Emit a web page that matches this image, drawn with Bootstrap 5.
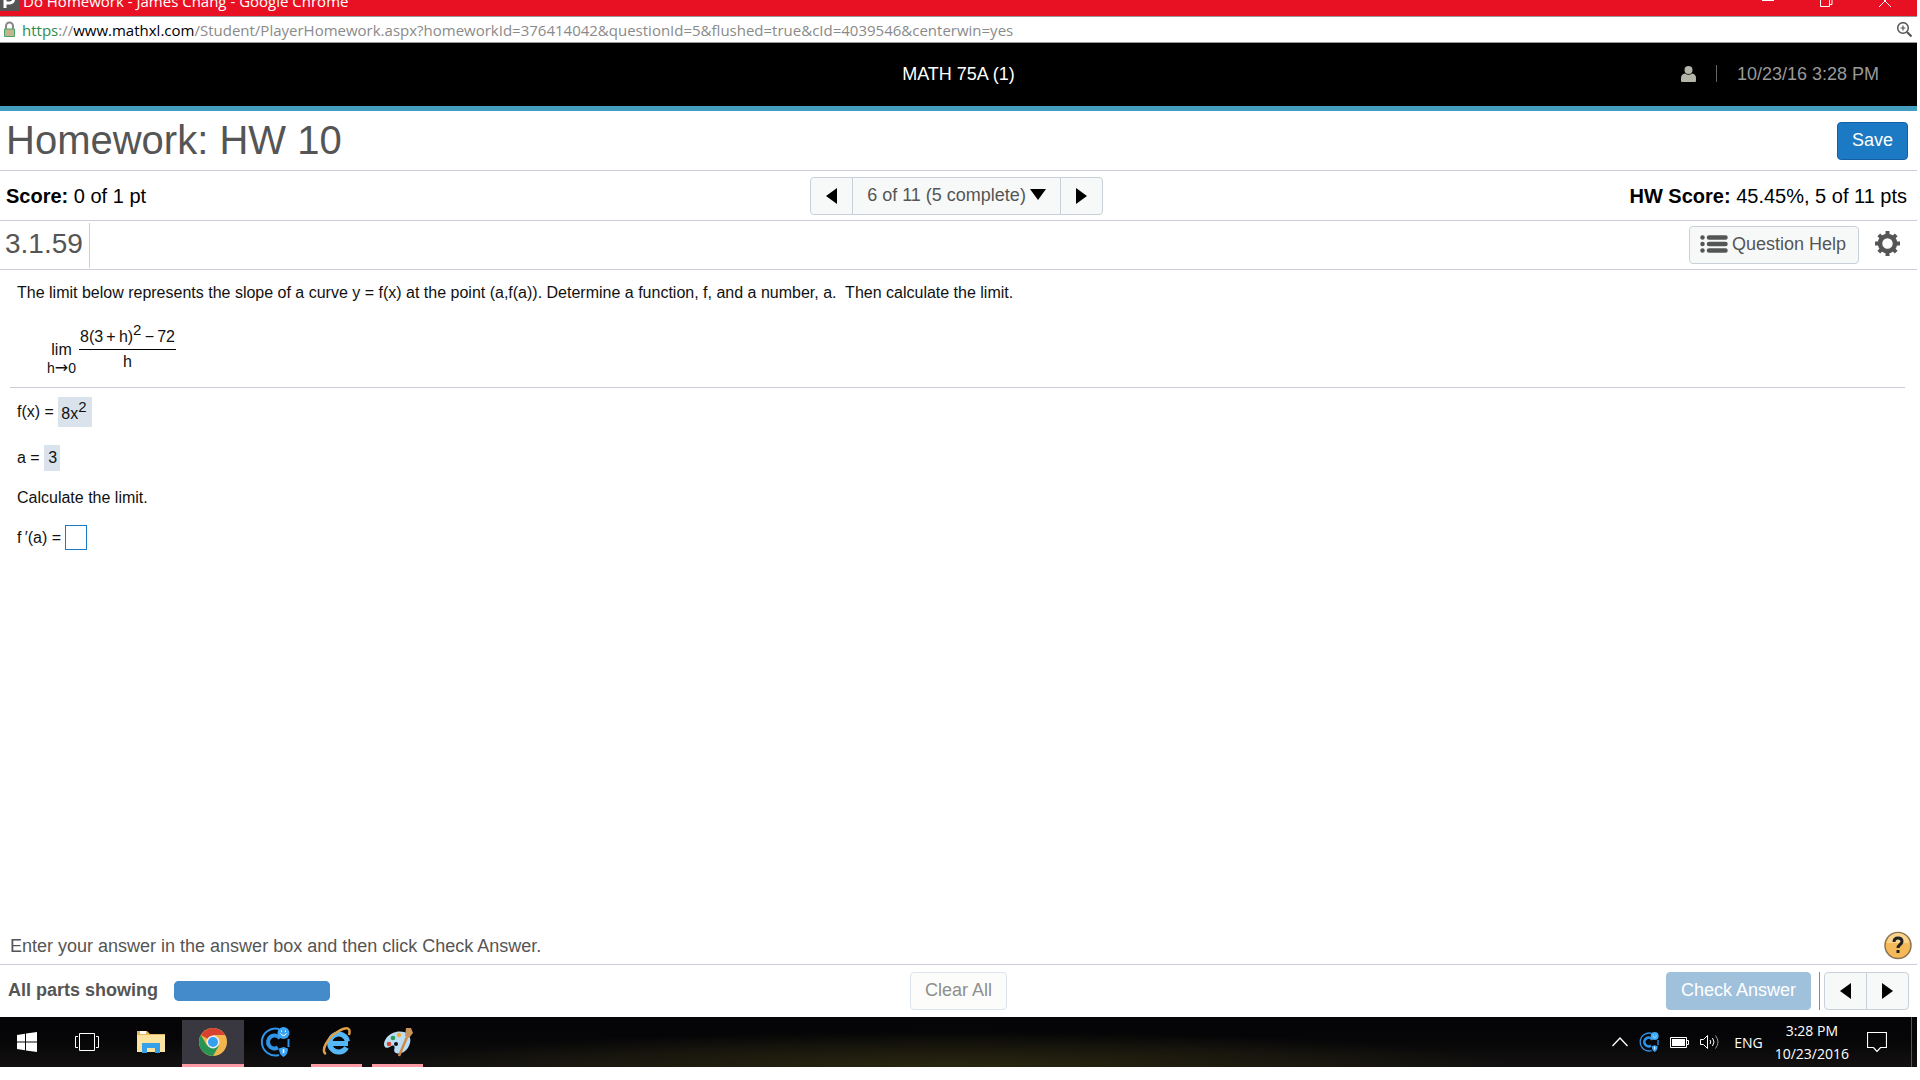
<!DOCTYPE html>
<html lang="en">
<head>
<meta charset="utf-8">
<meta name="viewport" content="width=device-width, initial-scale=1">
<title>Do Homework - James Chang</title>
<link href="https://cdn.jsdelivr.net/npm/bootstrap@5.3.0/dist/css/bootstrap.min.css" rel="stylesheet">
<style>
  body { font-family: "Liberation Sans", Arial, sans-serif; font-size: 16px; line-height: 20px; color: #111; background: #fff; }
  svg { display: block; flex: none; }
  .screen { min-height: 100vh; padding: 0 3px 13px 0; }
  .segoe { font-family: "Open Sans", "Noto Sans", sans-serif; }
  .side { flex: 1 1 0; }

  .title-bar { height: 16px; background: #e81123; color: #fff; font-size: 15px; line-height: 20px; }
  .title-bar .caption { margin-top: -9px; }
  .win-controls { gap: 46px; padding-right: 26px; }
  .address-bar { height: 27px; border-top: 1px solid #999; border-bottom: 1px solid #999; font-size: 15px; padding: 0 5px 0 3px; gap: 6px; color: #8a8a8a; }
  .address-bar .scheme { color: #2e8b4e; }
  .address-bar .host { color: #000; }

  .course-bar { height: 68px; background: #000; border-bottom: 5px solid #429dbf; font-size: 18px; color: #999; padding-bottom: 2px; }
  .course-name { color: #fff; }
  .bar-sep { width: 1px; height: 17px; background: #666; margin: 0 20px; }
  .stamp { padding-right: 38px; }

  .rule-b { border-bottom: 1px solid #cbcdd9; }
  .heading-row { height: 60px; padding: 0 9px 0 6px; }
  .heading-row h1 { font-size: 40px; line-height: 44px; color: #555; padding-bottom: 2px; }
  .score-row { height: 50px; padding: 0 10px 0 6px; font-size: 20px; color: #000; }
  .tool-row { height: 49px; padding: 0 17px 0 5px; color: #555; }
  .exercise-no { font-size: 28px; line-height: 32px; padding: 0 6px 2px 0; height: 45px; border-right: 1px solid #cbcdd9; }

  .px-btn { height: 38px; font-size: 18px; line-height: 20px; border-radius: 4px; padding: 0 14px 2px; border: 1px solid #c9d0da; background: #f7f9f9; color: #555; display: inline-flex; align-items: center; justify-content: center; }
  .px-btn:disabled { opacity: 1; }
  .px-save { background: #1c79c4; border-color: #1560a5; color: #fff; }
  .px-check:disabled { background: #9fc1dc; border-color: #9fc1dc; color: #fff; }
  .px-clear:disabled { background: #fcfdfa; border-color: #dde3ec; color: #8e8e8e; }
  .px-help { padding: 0 12px 2px 10px; }
  .arrow-btn { width: 43px; padding: 0; flex: none; }
  .gear { padding: 0; border: 0; background: none; color: #555; }

  .question { padding: 0 12px 0 10px; }
  .question .stem { padding: 13px 7px 0; }
  .limit-expr { padding: 19px 0 11px 37px; gap: 3px; }
  .frac-top { border-bottom: 1px solid #000; padding: 0 1px; height: 28px; line-height: 30px; white-space: nowrap; }
  .limit-expr .frac-bottom { line-height: 24px; }
  .lim-col { line-height: 20px; padding-top: 18px; }
  .lim-col .under { font-size: 14px; line-height: 16px; }
  .long-arrow { font-family: "DejaVu Sans", sans-serif; font-size: 16px; line-height: 0; }
  .pow { font-size: 15px; line-height: 0; vertical-align: 7px; }
  .answers { border-top: 1px solid #cbcdd9; padding: 9px 7px 0; }
  .given { background: #dae3eb; padding: 0 4px; display: inline-block; }
  .line-f { height: 30px; }
  .line-f .given { line-height: 34px; height: 30px; padding: 0 5px 0 3px; }
  .line-a { height: 25px; margin-top: 18px; }
  .line-a .given { line-height: 26px; padding: 0 3px 0 4px; }
  .line-c { margin-top: 18px; }
  .line-p { margin-top: 17px; }
  .answer-box { width: 22px; height: 25px; border: 1px solid #1c79c4; padding: 0; border-radius: 0; outline: 0; }

  .hint-row { height: 38px; padding: 0 5px 0 10px; font-size: 18px; color: #555; }
  .footer-row { height: 52px; padding: 0 8px; font-size: 18px; color: #555; }
  .footer-row b { padding-bottom: 3px; }
  .parts-bar { width: 156px; height: 20px; border-radius: 5px; background: #438bcb; --bs-progress-bar-bg: #438bcb; }
  .foot-sep { width: 1px; height: 38px; background: #888; }

  .taskbar { height: 50px; color: #fff; background: radial-gradient(ellipse 560px 36px at 950px 50px, #29260f, transparent 100%), linear-gradient(#050507 40%, #131110 100%); }
  .task-btn { width: 62px; height: 50px; padding: 0; border: 0; background: none; display: flex; align-items: center; justify-content: center; }
  .task-btn.start { width: 54px; }
  .task-btn.view { width: 66px; }
  .task-btn.running { width: 51px; border-bottom: 3px solid #ff99a4; border-top: 3px solid transparent; margin: 0 5px; }
  .task-btn.active { width: 62px; background: #39373f; margin: 0; background-clip: padding-box; }
  .tray { font-size: 14px; line-height: 23px; gap: 11px; }
  .tray-lang { padding: 0 1px 0 3px; }
  .tray-note { margin: 0 13px 0 7px; }
  .desktop-edge { width: 1px; height: 50px; background: #555; margin-right: 5px; }
</style>
<script src="https://cdn.jsdelivr.net/npm/bootstrap@5.3.0/dist/js/bootstrap.bundle.min.js"></script>
</head>
<body>
<svg width="0" height="0" class="position-absolute" aria-hidden="true">
  <symbol id="cbadge" viewBox="0 0 30 30">
    <path d="M19 2A13.500 13.500 0 1 0 19 28" fill="none" stroke="#2f93e8" stroke-width="2"/>
    <path d="M28.500 12v8" fill="none" stroke="#2f93e8" stroke-width="2"/>
    <path d="M20 11.500A6.500 6.500 0 1 0 18 20.500" fill="none" stroke="#2f93e8" stroke-width="4"/>
    <circle cx="23.500" cy="6" r="6" fill="#3ba5f5"/><path d="M20.500 6.500q3 4 6 0M21.500 3.500v1.500M25.500 3.500v1.500" stroke="#fff" fill="none"/>
    <path d="M19 21.500l4.500-1.500 4.500 1.500q0 6-4.500 8.500Q19 27.500 19 21.500z" fill="#3ba5f5"/><path d="M23.500 22v4" stroke="#fff" stroke-width="1.500"/>
  </symbol>
</svg>
<div class="screen d-flex flex-column">
  <div class="title-bar segoe d-flex align-items-start overflow-hidden">
    <svg width="19" height="11" viewBox="0 0 19 11"><path fill="#555" d="M0 0h19v11H0z"/><path d="M5 8V-4h5a3 3 0 0 1 0 7H6" fill="none" stroke="#fff" stroke-width="3"/></svg>
    <span class="caption ms-1">Do Homework - James Chang - Google Chrome</span>
    <div class="win-controls d-flex ms-auto">
      <svg width="12" height="8" viewBox="0 0 12 8"><path d="M0 .500h12" stroke="#fff"/></svg>
      <svg width="13" height="8" viewBox="0 0 13 8" fill="none" stroke="#fff"><path d="M.500 0v6.500h9V0M12 0v4.500h-2"/></svg>
      <svg width="12" height="8" viewBox="0 0 12 8"><path d="M0 7l6-6 6 6M5 0l1 1 1-1" fill="none" stroke="#fff"/></svg>
    </div>
  </div>
  <div class="address-bar segoe d-flex align-items-center">
    <svg width="13" height="17" viewBox="0 0 13 17"><path d="M3 8V5a3.500 3.500 0 0 1 7 0v3" fill="none" stroke="#888" stroke-width="2"/><path d="M1.500 8h10v7.500h-10z" fill="#c2b391" stroke="#4aa565"/></svg>
    <div><span class="scheme">https</span>://<span class="host">www.mathxl.com</span>/Student/PlayerHomework.aspx?homeworkId=376414042&amp;questionId=5&amp;flushed=true&amp;cId=4039546&amp;centerwin=yes</div>
    <svg class="ms-auto" width="15" height="15" viewBox="0 0 15 15" fill="none" stroke="#555"><circle cx="6" cy="6" r="5.300" stroke-width="1.500"/><path d="M3.500 6h5M6 3.500v5" stroke-width="1.200"/><path d="M10 10l4.500 4.500" stroke-width="2.200"/></svg>
  </div>

  <header class="course-bar d-flex align-items-center">
    <div class="side"></div>
    <div class="course-name">MATH 75A (1)</div>
    <div class="side d-flex align-items-center justify-content-end">
      <svg width="15" height="16" viewBox="0 0 15 16" fill="#b4b6aa"><circle cx="7.500" cy="4" r="4"/><path d="M0 15v-3q0-4 4-4.500 3.500 2.500 7 0 4 .500 4 4.500v3q0 1-1 1H1q-1 0-1-1z"/></svg>
      <span class="bar-sep"></span>
      <span class="stamp">10/23/16 3:28 PM</span>
    </div>
  </header>

  <div class="heading-row rule-b d-flex align-items-center justify-content-between">
    <h1 class="m-0 fw-normal">Homework: HW 10</h1>
    <button class="btn px-btn px-save" type="button">Save</button>
  </div>

  <div class="score-row rule-b d-flex align-items-center">
    <div class="side"><b>Score:</b> 0 of 1 pt</div>
    <div class="btn-group text-nowrap" role="group" aria-label="Question navigation">
      <button class="btn px-btn arrow-btn" type="button" aria-label="Previous question"><svg width="11" height="16" viewBox="0 0 11 16"><path d="M11 0v16L0 8z"/></svg></button>
      <button class="btn px-btn" type="button">6 of 11 (5 complete)<svg class="ms-1" width="16" height="11" viewBox="0 0 16 11"><path d="M0 0h16L8 11z"/></svg></button>
      <button class="btn px-btn arrow-btn" type="button" aria-label="Next question"><svg width="11" height="16" viewBox="0 0 11 16"><path d="M0 0v16l11-8z"/></svg></button>
    </div>
    <div class="side text-end"><b>HW Score:</b> 45.45%, 5 of 11 pts</div>
  </div>

  <div class="tool-row rule-b d-flex align-items-center">
    <div class="exercise-no d-flex align-items-center">3.1.59</div>
    <button class="btn px-btn px-help ms-auto" type="button"><svg class="me-1" width="28" height="18" viewBox="0 0 28 18" stroke="#555" stroke-width="4.500" stroke-linecap="round"><path d="M2.500 2.500h.010M2.500 9h.010M2.500 15.500h.010M9 2.500h16.500M9 9h16.500M9 15.500h16.500"/></svg>Question Help</button>
    <button class="gear ms-3 pb-1" type="button" aria-label="Settings"><svg width="25" height="25" viewBox="-12.500 -12.500 25 25"><circle r="7.500" fill="none" stroke="#555" stroke-width="4.500"/><path d="M0-12.500V-8M0 8v4.500M-12.500 0H-8M8 0h4.500M-8.700-8.700l3 3M8.700-8.700l-3 3M-8.700 8.700l3-3M8.700 8.700l-3-3" stroke="#555" stroke-width="4"/></svg></button>
  </div>

  <main class="question flex-grow-1">
    <p class="stem m-0">The limit below represents the slope of a curve y = f(x) at the point (a,f(a)). Determine a function, f, and a number, a.&nbsp; Then calculate the limit.</p>
    <div class="limit-expr d-flex">
      <div class="lim-col text-center"><div>lim</div><div class="under">h<span class="long-arrow">→</span>0</div></div>
      <div class="text-center"><div class="frac-top">8(3&thinsp;+&thinsp;h)<span class="pow">2</span>&thinsp;−&thinsp;72</div><div class="frac-bottom">h</div></div>
    </div>
    <div class="answers">
      <div class="line-f d-flex align-items-center">f(x) =&nbsp;<span class="given">8x<span class="pow">2</span></span></div>
      <div class="line-a d-flex align-items-center">a =&nbsp;<span class="given">3</span></div>
      <div class="line-c">Calculate the limit.</div>
      <div class="line-p d-flex align-items-center"><label for="ans">f&thinsp;′(a) =</label><input id="ans" class="answer-box ms-1" type="text"></div>
    </div>
  </main>

  <div class="hint-row rule-b d-flex align-items-center">
    <span>Enter your answer in the answer box and then click Check Answer.</span>
    <button class="gear ms-auto" type="button" aria-label="Help"><svg width="28" height="29" viewBox="0 0 28 29"><circle cx="14" cy="14.500" r="13" fill="#f6b95a" stroke="#8b7350" stroke-width="1.500"/><path d="M3 12a11 10 0 0 1 22 0z" fill="#fbd48e"/><path d="M10 11q0-4 4-4t4 3.500c0 3-4 3-4 6.500" fill="none" stroke="#222" stroke-width="3"/><path d="M12.500 19h3v3h-3z" fill="#222"/></svg></button>
  </div>
  <footer class="footer-row d-flex align-items-center">
    <div class="side d-flex align-items-center"><b>All parts showing</b><div class="progress parts-bar ms-3" role="progressbar" aria-label="Parts showing" aria-valuenow="100" aria-valuemin="0" aria-valuemax="100"><div class="progress-bar w-100"></div></div></div>
    <button class="btn px-btn px-clear" type="button" disabled>Clear All</button>
    <div class="side d-flex align-items-center justify-content-end">
      <button class="btn px-btn px-check" type="button" disabled>Check Answer</button>
      <span class="foot-sep ms-2 me-1"></span>
      <div class="btn-group" role="group" aria-label="Question paging">
        <button class="btn px-btn arrow-btn" type="button" aria-label="Previous"><svg width="11" height="16" viewBox="0 0 11 16"><path d="M11 0v16L0 8z"/></svg></button>
        <button class="btn px-btn arrow-btn" type="button" aria-label="Next"><svg width="11" height="16" viewBox="0 0 11 16"><path d="M0 0v16l11-8z"/></svg></button>
      </div>
    </div>
  </footer>

  <div class="taskbar segoe d-flex align-items-center">
    <button class="task-btn start" type="button" aria-label="Start"><svg width="20" height="20" viewBox="0 0 20 20" fill="#fff"><path d="M0 3l8-1.200V9.500H0zM9 1.600L20 0v9.500H9zM0 10.500h8v7.700L0 17zM9 10.500h11V20L9 18.400z"/></svg></button>
    <button class="task-btn view" type="button" aria-label="Task view"><svg width="24" height="18" viewBox="0 0 24 18" fill="none" stroke="#fff"><path d="M4.500.500h15v17h-15zM3 3.500H.500v11H3M21 3.500h2.500v11H21"/></svg></button>
    <button class="task-btn" type="button" aria-label="File Explorer"><svg width="28" height="24" viewBox="0 0 28 24"><path d="M0 1h10l3 3h15v18H0z" fill="#e9b75c"/><path d="M0 5h28v17H0z" fill="#fde3a0"/><path d="M3 1h6v3H3z" fill="#fff"/><path d="M5 23V13h18v10h-5v-5h-8v5z" fill="#36a0e8"/></svg></button>
    <button class="task-btn running active" type="button" aria-label="Google Chrome"><svg width="28" height="28" viewBox="-14 -14 28 28"><circle r="14" fill="#f3b64f"/><path d="M0 0L-12.100-7A14 14 0 0 1 12.100-7H0z" fill="#d9412f"/><path d="M-12.100-7A14 14 0 0 0 0 14L6 3.500-6 3.500z" fill="#279355"/><circle r="6.500" fill="#eee"/><circle r="5" fill="#36a0f0"/></svg></button>
    <button class="task-btn" type="button" aria-label="Security"><svg width="30" height="30"><use href="#cbadge"/></svg></button>
    <button class="task-btn running" type="button" aria-label="Internet Explorer"><svg width="30" height="30" viewBox="0 0 30 30"><path d="M8 16.500h18M24.500 20.500a9 9 0 1 1 1-6" fill="none" stroke="#55b7f5" stroke-width="5"/><path d="M4 27C-2 24 6 10 16 4.500S29 1 27 8" fill="none" stroke="#e0a04a" stroke-width="2.500"/></svg></button>
    <button class="task-btn running" type="button" aria-label="Paint"><svg width="30" height="30" viewBox="0 0 30 30"><path d="M13 5c9-2 16 3 14 11s-9 12-14 10c-4-2 0-5-2-7s-6 4-9 1S3 7 13 5z" fill="#b9def5"/><circle cx="6" cy="17" r="2.300" fill="#d8452f"/><circle cx="10" cy="11" r="2.300" fill="#2f9b57"/><circle cx="16" cy="8" r="2.300" fill="#f0b040"/><circle cx="13" cy="17" r="2" fill="#111"/><path d="M16 29l8-19" stroke="#d08a45" stroke-width="2.500"/><path d="M22 9l1-8 5 0 2 5-4 5z" fill="#c9935a"/></svg></button>
    <div class="tray d-flex align-items-center ms-auto">
      <svg width="16" height="10" viewBox="0 0 16 10"><path d="M.500 9L8 1l7.500 8" fill="none" stroke="#fff" stroke-width="1.300"/></svg>
      <svg width="20" height="20"><use href="#cbadge"/></svg>
      <svg width="19" height="11" viewBox="0 0 19 11"><path d="M.500.500h16v10H.500zM17 3.500h1.500v4H17" fill="none" stroke="#fff"/><path d="M2 2h13v7H2z" fill="#fff"/></svg>
      <svg width="20" height="16" viewBox="0 0 20 16" fill="none" stroke="#fff"><path d="M.500 5.500h3l4-4v13l-4-4h-3zM10 6q1.500 2 0 4M12.500 4q3 4 0 8"/><path d="M15.500 1.500q5 6.500 0 13" stroke="#999"/></svg>
      <span class="tray-lang">ENG</span>
      <div class="text-center">3:28 PM<br>10/23/2016</div>
      <svg class="tray-note" width="20" height="20" viewBox="0 0 20 20" fill="none" stroke="#fff" stroke-width="1.200"><path d="M.500.500h19v15h-6l-3.500 4-3.500-4h-6z"/></svg>
      <span class="desktop-edge"></span>
    </div>
  </div>
</div>
</body>
</html>
